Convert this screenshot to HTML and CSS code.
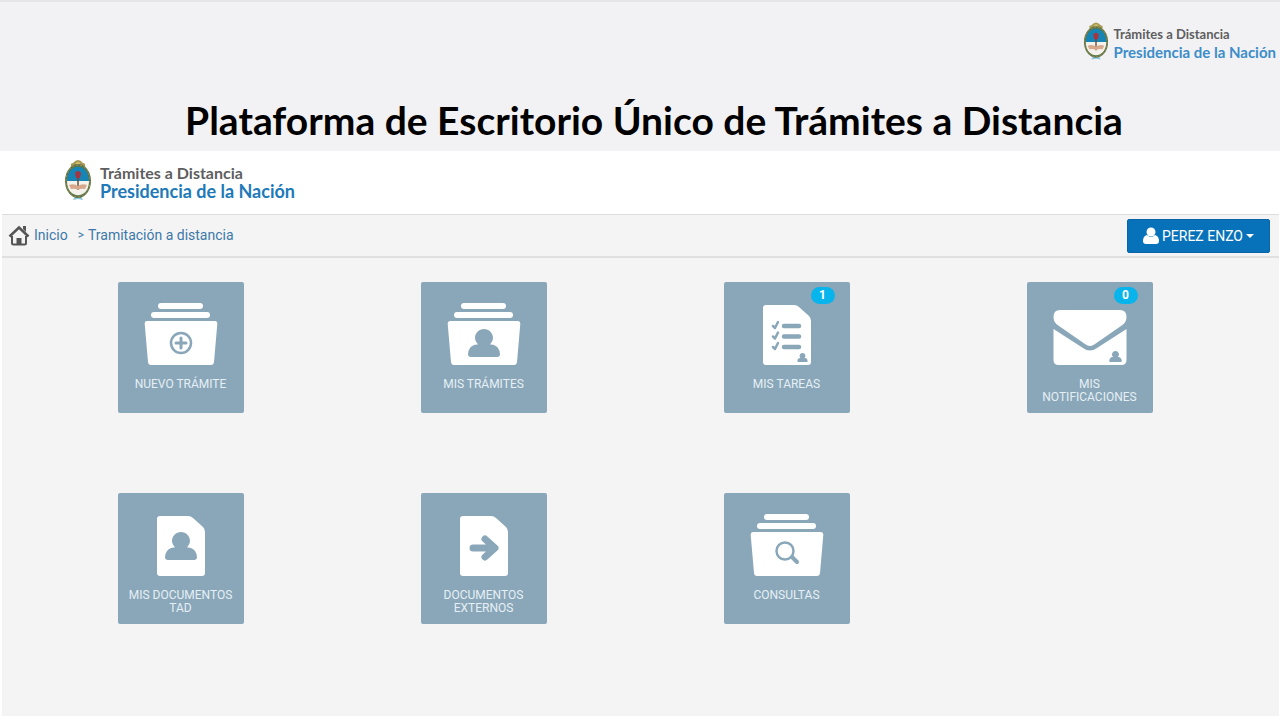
FILE: index.html
```html
<!DOCTYPE html>
<html lang="es">
	<head>
		<meta charset="utf-8">
		<title>Trámites a Distancia</title>
		<link rel="stylesheet" href="styles.css">
	</head>
	<body>
		<!-- shapes used more than once -->
		<svg class="defs" aria-hidden="true">
			<symbol id="escudo" viewBox="0 0 28 42">
				<path d="M8 9 Q5 4 9 4 Q14 -2 19 4 Q23 4 20 9 Z" fill="#a79a55"/>
				<circle cx="14" cy="5" r="2" fill="#d9bf72"/>
				<path d="M11 37 L14 35 L17 37 L19 41 L14 40 L9 41 Z" fill="#8cc6dc"/>
				<ellipse cx="14" cy="22" rx="13" ry="17" fill="#5d7747"/>
				<ellipse cx="14" cy="22" rx="12" ry="16" fill="none" stroke="#a58c55" stroke-dasharray="2 2"/>
				<path d="M3 22 C3 3 25 3 25 22 Z" fill="#1684b4"/>
				<path d="M3 22 C3 41 25 41 25 22 Z" fill="#f5f2ec"/>
				<path d="M14 16 V31" stroke="#684c3b" stroke-width="1.5"/>
				<path d="M11 14 Q14 10 17 14 L16 19 H12 Z" fill="#a63540"/>
				<path d="M5 26 Q10 24 14 27 Q18 24 23 26 L21 30 Q17 29 14 31 Q11 29 7 30 Z" fill="#d7a88c"/>
			</symbol>
			<symbol id="carpeta" viewBox="0 0 126 90">
				<rect x="40" y="21" width="45" height="6" rx="3"/>
				<rect x="33" y="30" width="59" height="6" rx="3"/>
				<path d="M29 39 H97 Q99.500 39 99.300 42 L96 80 Q95.700 83 93 83 H33 Q30.300 83 30 80 L26.700 42 Q26.500 39 29 39 Z"/>
			</symbol>
			<symbol id="hoja" viewBox="0 0 126 90">
				<path d="M42 23 H70 Q73 23 75 25 L85 34 Q87 36 87 39 V80 Q87 83 84 83 H42 Q39 83 39 80 V26 Q39 23 42 23 Z"/>
			</symbol>
			<symbol id="persona" viewBox="0 0 32 28">
				<path d="M16 0 C21 0 25 4 25 9 C25 12 23 14 22 15.500 Q27 15 30 19 Q32 22 32 25 Q32 28 29 28 H3 Q0 28 0 25 Q0 22 2 19 Q5 15 10 15.500 C9 14 7 12 7 9 C7 4 11 0 16 0 Z"/>
			</symbol>
		</svg>

		<header class="top">
			<div class="logo logo-small">
				<svg class="escudo"><use href="#escudo"/></svg>
				<div class="logo-text"><span>Trámites a Distancia</span><strong>Presidencia de la Nación</strong></div>
			</div>
			<h1>Plataforma de Escritorio Único de Trámites a Distancia</h1>
		</header>

		<div class="panel">
			<div class="brand">
				<div class="logo">
					<svg class="escudo"><use href="#escudo"/></svg>
					<div class="logo-text"><span>Trámites a Distancia</span><strong>Presidencia de la Nación</strong></div>
				</div>
			</div>

			<nav class="bar">
				<div class="crumbs">
					<svg class="home" viewBox="0 0 22 21">
						<path d="M4 11 V18 Q4 19.500 5.500 19.500 H16.500 Q18 19.500 18 18 V11" fill="none" stroke="#555" stroke-width="2"/>
						<path d="M1.500 11.500 L11 2.500 L20.500 11.500" fill="none" stroke="#555" stroke-width="2.500"/>
						<path d="M15 1 H18 V7 L15 4 Z M8.500 13 H13.500 V20 H8.500 Z" fill="#555"/>
					</svg>
					<a href="#inicio">Inicio</a>
					<span class="sep">&gt;</span>
					<a href="#tramitacion">Tramitación a distancia</a>
				</div>
				<button type="button" class="user">
					<svg class="user-icon" viewBox="0 0 16 17"><circle cx="8" cy="5" r="4.500"/><path d="M4 8 Q8 12 12 8 Q16 9 16 14 Q16 17 13 17 H3 Q0 17 0 14 Q0 9 4 8 Z"/></svg>
					PEREZ ENZO
					<span class="caret"></span>
				</button>
			</nav>

			<main class="tiles">
				<a class="tile" href="#nuevo">
					<svg class="icon" viewBox="0 0 126 90">
						<use href="#carpeta"/>
						<g class="line"><circle cx="63" cy="61" r="10"/><path d="M58 61 H68 M63 56 V66" stroke-width="3"/></g>
					</svg>
					<span>NUEVO TRÁMITE</span>
				</a>
				<a class="tile" href="#tramites">
					<svg class="icon" viewBox="0 0 126 90">
						<use href="#carpeta"/>
						<use class="cut" href="#persona" x="47" y="47" width="32" height="28"/>
					</svg>
					<span>MIS TRÁMITES</span>
				</a>
				<a class="tile" href="#tareas">
					<b class="badge">1</b>
					<svg class="icon" viewBox="0 0 126 90">
						<use href="#hoja"/>
						<g class="line">
							<path d="M60 44 H75 M60 54.500 H75 M60 65 H75" stroke-width="4.500"/>
							<path d="M49 44 L51 46 L54 40 M49 54.500 L51 56.500 L54 50.500 M49 65 L51 67 L54 61"/>
						</g>
						<use class="cut" href="#persona" x="73" y="71" width="11" height="9"/>
					</svg>
					<span>MIS TAREAS</span>
				</a>
				<a class="tile" href="#notificaciones">
					<b class="badge">0</b>
					<svg class="icon" viewBox="0 0 126 90">
						<path d="M33 28 H93 Q99.500 28 99.500 35 Q99.500 41 94 44 L68 62 Q63 66 58 62 L32 44 Q26.500 41 26.500 35 Q26.500 28 33 28 Z"/>
						<path d="M26.500 47 L56 66 Q63 71 70 66 L99.500 47 V78 Q99.500 83 94.500 83 H31.500 Q26.500 83 26.500 78 Z"/>
						<use class="cut" href="#persona" x="82" y="69" width="13" height="11"/>
					</svg>
					<span>MIS NOTIFICACIONES</span>
				</a>
				<a class="tile" href="#documentos">
					<svg class="icon" viewBox="0 0 126 90">
						<use href="#hoja"/>
						<use class="cut" href="#persona" x="47" y="39" width="32" height="28"/>
					</svg>
					<span>MIS DOCUMENTOS TAD</span>
				</a>
				<a class="tile" href="#externos">
					<svg class="icon" viewBox="0 0 126 90">
						<use href="#hoja"/>
						<g class="line"><path d="M52 55 H73 M64 46 L74 55 L64 64" stroke-width="7"/></g>
					</svg>
					<span>DOCUMENTOS EXTERNOS</span>
				</a>
				<a class="tile" href="#consultas">
					<svg class="icon" viewBox="0 0 126 90">
						<use href="#carpeta"/>
						<g class="line"><circle cx="61" cy="58" r="8.500"/><path d="M68 64 L73 69" stroke-width="4"/></g>
					</svg>
					<span>CONSULTAS</span>
				</a>
			</main>
		</div>
	</body>
</html>
```

FILE: styles.css
```css
* {
	box-sizing: border-box;
}

body {
	margin: 0;
	background-color: #fff;
	font-family: Roboto, sans-serif;
}

a {
	color: #3c78aa;
	text-decoration: none;
}

.defs {
	position: absolute;
	width: 0;
	height: 0;
}

/* header */
.top {
	background-color: #f2f2f4;
	border-top: 2px solid #e6e6e8;
	padding: 18px 4px 7px 32px;
}

h1 {
	margin: 34px 0 0;
	font-family: Lato, sans-serif;
	font-size: 39px;
	font-weight: bold;
	line-height: 48px;
	text-align: center;
	color: #000;
}

.logo {
	display: flex;
	align-items: center;
	gap: 8px;
	font-family: Lato, sans-serif;
}

.logo-small {
	justify-content: flex-end;
	gap: 5px;
}

.escudo {
	width: 28px;
	height: 42px;
}

.logo-small .escudo {
	width: 26px;
}

.logo-text {
	padding-top: 4px;
}

.logo-text span, .logo-text strong {
	display: block;
	font-size: 16px;
	line-height: 18px;
	font-weight: bold;
	color: #5e5e60;
}

.logo-text strong {
	font-size: 18px;
	color: #2079b8;
}

.logo-small span {
	font-size: 13px;
}

.logo-small strong {
	font-size: 15px;
	color: #3c8dc9;
}

.panel {
	margin: 0 1px 0 2px;
	background-color: #f4f4f4;
}

.brand {
	background-color: #fff;
	padding: 8px 62px 13px;
}

/* breadcrumb bar */
.bar {
	display: flex;
	justify-content: space-between;
	align-items: center;
	height: 44px;
	padding: 0 9px 0 6px;
	border-top: 1px solid #dcdcdc;
	border-bottom: 2px solid #e0e0e0;
}

.crumbs {
	display: flex;
	align-items: center;
	gap: 4px;
	font-size: 14px;
	line-height: 18px;
}

.crumbs a, .sep {
	padding-bottom: 2px;
}

.home {
	width: 22px;
	height: 21px;
}

.sep {
	margin-left: 6px;
	font-size: 12px;
	color: #3c78aa;
}

.user {
	display: flex;
	align-items: center;
	gap: 3px;
	height: 34px;
	padding: 0 15px;
	border: 1px solid #0a65a8;
	border-radius: 2px;
	background-color: #0772ba;
	color: #fff;
	font-family: Roboto, sans-serif;
	font-size: 14px;
}

.user-icon {
	width: 16px;
	height: 17px;
	fill: #fff;
}

.caret {
	border: 4px solid transparent;
	border-top-color: #fff;
	border-bottom: 0;
}

/* tiles */
.tiles {
	display: grid;
	grid-template-columns: repeat(4, 1fr);
	gap: 80px 0;
	justify-items: center;
	padding: 24px 38px 92px 27px;
}

.tile {
	position: relative;
	width: 126px;
	height: 131px;
	border-radius: 2px;
	background-color: #89a7b9;
	color: #e6eff5;
	font-size: 12px;
	line-height: 13px;
	text-align: center;
}

.tile span {
	display: block;
	margin: 6px 8px 0;
}

.icon {
	display: block;
	width: 126px;
	height: 90px;
	fill: #fff;
}

.cut {
	fill: #89a7b9;
}

.line {
	fill: none;
	stroke: #89a7b9;
	stroke-width: 2.5;
	stroke-linecap: round;
	stroke-linejoin: round;
}

.badge {
	position: absolute;
	top: 5px;
	right: 15px;
	width: 24px;
	border-radius: 9px;
	background-color: #08b4ec;
	color: #fff;
	font-size: 12px;
	line-height: 17px;
}
```
